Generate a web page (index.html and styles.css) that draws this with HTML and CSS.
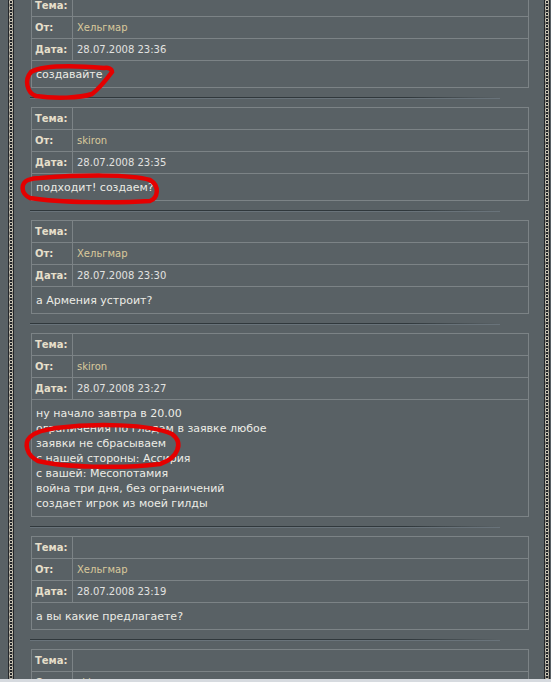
FILE: index.html
```html
<!DOCTYPE html>
<html lang="ru">
<head>
  <meta charset="UTF-8">
  <title>Сообщения</title>
  <link rel="stylesheet" href="styles.css">
</head>
<body>
  <div class="frame">
    <div class="chain"></div>
    <div class="content">
      <div class="posts">

        <div class="post">
          <div class="row"><div class="label">Тема:</div><div class="value"></div></div>
          <div class="row"><div class="label">От:</div><div class="value author">Хельгмар</div></div>
          <div class="row"><div class="label">Дата:</div><div class="value date">28.07.2008 23:36</div></div>
          <div class="message">создавайте</div>
        </div>
        <div class="separator"></div>

        <div class="post">
          <div class="row"><div class="label">Тема:</div><div class="value"></div></div>
          <div class="row"><div class="label">От:</div><div class="value author">skiron</div></div>
          <div class="row"><div class="label">Дата:</div><div class="value date">28.07.2008 23:35</div></div>
          <div class="message">подходит! создаем?</div>
        </div>
        <div class="separator"></div>

        <div class="post">
          <div class="row"><div class="label">Тема:</div><div class="value"></div></div>
          <div class="row"><div class="label">От:</div><div class="value author">Хельгмар</div></div>
          <div class="row"><div class="label">Дата:</div><div class="value date">28.07.2008 23:30</div></div>
          <div class="message">а Армения устроит?</div>
        </div>
        <div class="separator"></div>

        <div class="post">
          <div class="row"><div class="label">Тема:</div><div class="value"></div></div>
          <div class="row"><div class="label">От:</div><div class="value author">skiron</div></div>
          <div class="row"><div class="label">Дата:</div><div class="value date">28.07.2008 23:27</div></div>
          <div class="message">ну начало завтра в 20.00<br>ограничения по гладам в заявке любое<br>заявки не сбрасываем<br>с нашей стороны: Ассирия<br>с вашей: Месопотамия<br>война три дня, без ограничений<br>создает игрок из моей гилды</div>
        </div>
        <div class="separator"></div>

        <div class="post">
          <div class="row"><div class="label">Тема:</div><div class="value"></div></div>
          <div class="row"><div class="label">От:</div><div class="value author">Хельгмар</div></div>
          <div class="row"><div class="label">Дата:</div><div class="value date">28.07.2008 23:19</div></div>
          <div class="message">а вы какие предлагаете?</div>
        </div>
        <div class="separator"></div>

        <div class="post">
          <div class="row"><div class="label">Тема:</div><div class="value"></div></div>
          <div class="row"><div class="label">От:</div><div class="value author">skiron</div></div>
          <div class="row"><div class="label">Дата:</div><div class="value date">28.07.2008 23:15</div></div>
          <div class="message">давайте</div>
        </div>

      </div>
    </div>
    <div class="chain"></div>
  </div>

  <!-- пометки красным поверх скриншота -->
  <svg class="marks" width="551" height="682" viewBox="0 0 551 682">
    <path d="M104 68 C 80 66, 45 64, 31 72 C 24 80, 27 93, 36 96 C 55 99, 80 98, 92 94 C 100 88, 106 80, 112 72 C 112 69, 108 67, 104 68" />
    <path d="M40 178 C 80 175, 130 174, 150 180 C 160 186, 158 198, 150 201 C 120 203, 60 203, 30 198 C 20 193, 21 183, 28 180 C 33 178, 37 178, 40 178" />
    <path d="M56 428 C 95 423, 150 424, 172 434 C 184 443, 178 458, 160 464 C 120 469, 62 467, 38 461 C 26 455, 24 443, 30 437 C 36 431, 46 430, 56 428" />
  </svg>
</body>
</html>
```

FILE: styles.css
```css
* {
  margin: 0;
  padding: 0;
  box-sizing: border-box;
}

html, body {
  height: 100%;
  overflow: hidden;
}

body {
  background: #596165;
  font-family: "DejaVu Sans", Verdana, sans-serif;
  color: #e4e4de;
  position: relative;
}

.frame {
  display: flex;
  height: 679px;
  padding: 0 1px 0 8px;
  border-bottom: 3px solid #d6dadf;
  box-sizing: content-box;
}

.chain {
  width: 6px;
  flex: none;
  background-color: #23262a;
  background-image:
    radial-gradient(circle at 3px 2px, transparent 1px, #c9c4b4 1.2px, #c9c4b4 2px, transparent 2.4px),
    radial-gradient(circle at 3px 5px, transparent 1px, #8b877c 1.2px, #8b877c 2px, transparent 2.4px);
  background-size: 6px 6px;
}

.content {
  flex: 1;
  padding: 0 15px 0 17px;
  overflow: hidden;
}

.posts {
  margin-top: -6px;
  display: flex;
  flex-direction: column;
}

.post {
  border: 1px solid #7c8386;
  border-bottom: none;
}

.row {
  display: flex;
  height: 22px;
  border-bottom: 1px solid #7c8386;
}

.label {
  width: 41px;
  flex: none;
  border-right: 1px solid #7c8386;
  padding-left: 3px;
  font-size: 10px;
  font-weight: bold;
  line-height: 21px;
  color: #e6dfca;
}

.value {
  flex: 1;
  padding-left: 4px;
  font-size: 10px;
  line-height: 21px;
}

.author {
  color: #d9c99c;
}

.date {
  color: #e2e2e0;
}

.message {
  padding: 6px 4px 5px 4px;
  font-size: 11px;
  line-height: 15px;
  color: #ececE6;
  border-bottom: 1px solid #7c8386;
}

.separator {
  height: 19px;
}

.separator::after {
  content: "";
  display: block;
  margin: 9px 0 0 -1px;
  width: 470px;
  height: 1px;
  background: linear-gradient(to right, #30383c, #30383c 80%, rgba(48, 56, 60, 0));
  border-bottom: 1px solid #69737a;
}

.marks {
  position: absolute;
  left: 0;
  top: 0;
  pointer-events: none;
}

.marks path {
  fill: none;
  stroke: #e40000;
  stroke-width: 4.5;
  stroke-linecap: round;
}
```
